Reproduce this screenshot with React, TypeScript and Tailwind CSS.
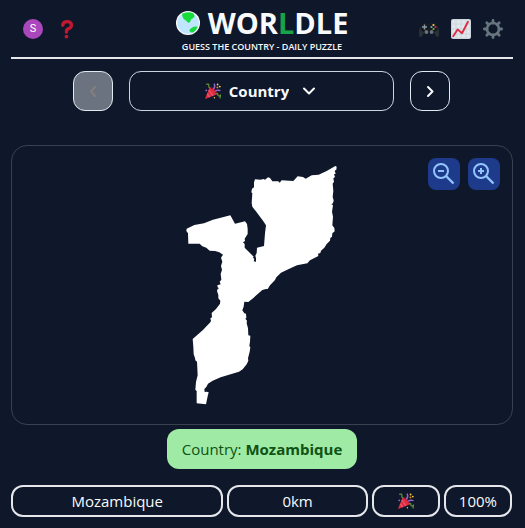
import { useState, type ReactNode } from "react";

function Globe() {
  return (
    <svg viewBox="0 0 24 24" className="size-6 shrink-0" aria-hidden="true">
      <circle cx="12" cy="12" r="12" fill="#fff" />
      <circle cx="12" cy="12" r="10.8" fill="#bfe6ff" />
      <path d="M6 2.8Q12 -.2 17.6 2.6L18.6 5.6L16.6 7.4L15 8.2L14.4 10.5L12.6 12L10.4 10L7.4 7.8L6.4 5.2Z" fill="#16dc3a" />
      <path d="M21.8 15.6L17.5 15.8L13.8 18.2L13.4 20L15.2 21.6L17.4 21.4Q20.6 19 21.8 15.6Z" fill="#16dc3a" />
    </svg>
  );
}

function QuestionMark() {
  return (
    <svg viewBox="0 0 20 20" className="size-5" aria-hidden="true">
      <path d="M5.7 6.2Q6.2 2.4 10.6 2.6Q14.6 3 14.4 6.4Q14.1 9 11.6 9.6Q9.3 10.3 9.5 13" fill="none" stroke="#be1931" strokeWidth="3.4" strokeLinecap="round" />
      <circle cx="9.5" cy="17.6" r="1.9" fill="#be1931" />
    </svg>
  );
}

function Gamepad() {
  return (
    <svg viewBox="0 0 20 20" className="size-5" aria-hidden="true">
      <path d="M0 17V11L2.4 6L4 4.4H8L9 5.4H11L12 4.4H16L17.6 6L20 11V17Q18 19 16.6 16.6L15 13.4H5L3.4 16.6Q2 19 0 17Z" fill="#2b3036" />
      <path d="M2.4 6L4 4.4H8L9 5.4H11L12 4.4H16L17.6 6L18.6 11L14 14H6L1.4 11Z" fill="#17191d" />
      <path d="M5.5 5.5V10.5M3 8H8" stroke="#8899a6" strokeWidth="1.5" />
      <circle cx="7.4" cy="13" r="1.9" fill="#66757f" />
      <circle cx="12.6" cy="13" r="1.9" fill="#66757f" />
      <circle cx="14.5" cy="6" r="1.1" fill="#ffcc4d" />
      <circle cx="16.5" cy="8" r="1.1" fill="#dd2e44" />
      <circle cx="12.5" cy="8" r="1.1" fill="#55acee" />
      <circle cx="14.5" cy="10" r="1.1" fill="#77b255" />
    </svg>
  );
}

function Chart() {
  return (
    <svg viewBox="0 0 20 20" className="size-5" aria-hidden="true">
      <rect width="20" height="20" rx="2" fill="#ccd6dd" />
      <rect x="1.2" y="1.2" width="17.6" height="17.6" rx="1" fill="#e1e8ed" />
      <path d="M5 1V19M10 1V19M15 1V19M1 5H19M1 10H19M1 15H19" stroke="#ccd6dd" strokeWidth="1" />
      <path d="M2.2 17.2L6.6 10.4L11 14.2L17 2.8" fill="none" stroke="#dd2e44" strokeWidth="1.9" strokeLinecap="round" strokeLinejoin="round" />
    </svg>
  );
}

function Gear() {
  return (
    <svg viewBox="0 0 20 20" className="size-5" fill="none" stroke="#66757f" aria-hidden="true">
      <circle cx="10" cy="10" r="6" strokeWidth="2.6" />
      <path d="M10 1.4V4M10 16V18.6M1.4 10H4M16 10H18.6M3.8 3.8L5.7 5.7M14.3 14.3L16.2 16.2M3.8 16.2L5.7 14.3M14.3 5.7L16.2 3.8" strokeWidth="2.8" strokeLinecap="round" />
    </svg>
  );
}

function Popper() {
  return (
    <svg viewBox="0 0 16 16" className="size-4 shrink-0" aria-hidden="true">
      <path d="M.3 15.1Q-.1 15.8 .8 15.7L12.2 11.3Q11.8 8.2 9.2 6Q7 4 4.6 4.2Z" fill="#dd2e44" />
      <path d="M3.8 7L8 13M2.2 10.8L4.8 14.2" stroke="#ea596e" strokeWidth="1.2" />
      <path d="M6 5.2Q9.8 5.6 11.6 10.6" fill="none" stroke="#a0041e" strokeWidth="1.1" />
      <path d="M8.2 6.3Q10.8 3.4 9 .6" fill="none" stroke="#9266cc" strokeWidth="1.5" />
      <path d="M10 8.3Q12.6 6.4 15.5 7.7" fill="none" stroke="#9266cc" strokeWidth="1.4" />
      <path d="M1.2 1.4Q4.4 .2 3.8 2.8Q3.6 4.4 4.8 5" fill="none" stroke="#5c913b" strokeWidth="1.3" />
      <path d="M11.2 10.8Q13 9.8 12.8 11.8Q13 13.8 15.4 12.2L15 15.4" fill="none" stroke="#5c913b" strokeWidth="1.3" />
      <circle cx="1.3" cy="7.4" r=".9" fill="#9266cc" />
      <circle cx="12.6" cy="1.5" r=".9" fill="#ffcc4d" />
      <circle cx="14.8" cy="3.6" r=".9" fill="#ffcc4d" />
      <circle cx="12.4" cy="4.4" r=".9" fill="#f4900c" />
      <circle cx="9.4" cy="14.8" r=".7" fill="#ffcc4d" />
    </svg>
  );
}

function Chevron({ d }: { d: string }) {
  return (
    <svg viewBox="0 0 16 16" className="size-4 shrink-0" fill="none" stroke="currentColor" strokeWidth="2" strokeLinecap="round" strokeLinejoin="round" aria-hidden="true">
      <path d={d} />
    </svg>
  );
}

function Magnifier({ plus = false }: { plus?: boolean }) {
  return (
    <svg viewBox="0 0 24 24" className="size-6" fill="none" stroke="#93c5fd" strokeWidth="2" aria-hidden="true">
      <circle cx="9" cy="9" r="7" />
      <path d={plus ? "M6 9H12M9 6V12" : "M6 9H12"} />
      <path d="M14 14L21.5 21.5" strokeWidth="2.4" />
    </svg>
  );
}

function CountryShape() {
  return (
    <svg viewBox="0 0 495 780" className="h-[260px] w-[165px]" fill="#fff" role="img" aria-label="Country outline">
      <path d="M225 73L242 74L250 72L255 74L264 67L270 69L277 79L295 79L299 83L305 76L340 78L353 64L369 66L377 71L395 61L416 59L440 48L466 33L470 35L469 44L464 47L467 56L462 58L465 66L460 70L462 80L458 86L460 108L458 126L461 136L459 145L454 147L459 151L456 170L459 185L457 211L463 219L464 229L457 235L456 245L451 249L450 257L440 267L433 278L423 287L421 294L414 296L415 303L390 316L382 325L351 331L328 341L303 353L289 367L285 375L270 391L263 402L258 402L247 405L221 428L205 441L193 440L191 455L187 466L193 475L198 476L199 489L196 491L201 497L200 505L204 520L205 541L211 542L210 560L208 573L211 577L209 590L204 610L205 617L200 628L188 643L177 650L122 667L98 677L84 686L79 696L73 702L74 711L80 710L86 712L83 724L78 748L50 745L50 708L46 704L48 681L53 661L51 620L46 616L45 609L41 598L40 575L38 552L68 526L91 502L93 497L91 490L96 487L95 474L108 462L120 446L121 437L115 430L115 420L111 408L113 402L117 400L113 397L112 391L122 388L119 380L124 374L122 357L126 344L123 333L127 320L123 308L129 299L118 292L105 288L89 287L79 278L67 274L59 266L25 266L24 235L19 228L20 221L43 210L72 205L99 194L151 181L165 206L195 199L201 207L203 221L203 237L194 251L195 258L189 262L194 267L194 278L221 305L219 308L223 312L221 319L228 320L228 310L226 302L230 294L231 278L252 273L255 235L258 211L248 196L217 155L215 144L217 115L214 112L216 101L222 97L222 82Z" />
    </svg>
  );
}

function IconButton({ label, children }: { label: string; children: ReactNode }) {
  return (
    <button type="button" aria-label={label} className="flex size-5 items-center justify-center">
      {children}
    </button>
  );
}

function ResultCell({ className = "", children }: { className?: string; children: ReactNode }) {
  return (
    <div className={`flex h-8 items-center justify-center rounded-xl border-2 border-gray-200 ${className}`}>
      {children}
    </div>
  );
}

export default function App() {
  const [round, setRound] = useState("Country");

  return (
    <div className="min-h-screen bg-[#0f172a] pr-3 pl-[11px] font-['Open_Sans',sans-serif] text-[15px] leading-6 text-slate-50">
      <header className="flex h-[59px] items-center justify-between border-b-2 border-gray-200 px-2.5">
        <div className="flex w-20 items-center gap-3.5 pl-0.5">
          <button type="button" aria-label="Account" className="flex size-5 items-center justify-center rounded-full bg-[#ab47bc] font-['Roboto',sans-serif] text-[11px] leading-none text-white">
            S
          </button>
          <IconButton label="Help"><QuestionMark /></IconButton>
        </div>
        <div className="flex flex-col items-center">
          <h1 className="flex items-center gap-2 text-[29px] leading-9 font-bold">
            <Globe />
            <span>WOR<span className="text-[#16a34a]">L</span>DLE</span>
          </h1>
          <p className="text-[9px] leading-3 font-semibold whitespace-nowrap">GUESS THE COUNTRY - DAILY PUZZLE</p>
        </div>
        <div className="flex w-20 items-center justify-end gap-3">
          <IconButton label="More games"><Gamepad /></IconButton>
          <IconButton label="Statistics"><Chart /></IconButton>
          <IconButton label="Settings"><Gear /></IconButton>
        </div>
      </header>

      <main>
        <nav className="mt-3 flex justify-center gap-4 pr-0.5" aria-label="Rounds">
          <button type="button" disabled aria-label="Previous round" className="flex size-10 items-center justify-center rounded-xl border border-slate-200 bg-[#6b7280] text-[#85807b]">
            <Chevron d="M10 4L6 8.5L10 13" />
          </button>
          <label className="flex h-10 w-[265px] items-center justify-center rounded-xl border border-slate-300">
            <Popper />
            <select
              aria-label="Round"
              value={round}
              onChange={(event) => setRound(event.target.value)}
              className="ml-2 field-sizing-content appearance-none bg-transparent pr-3 text-[15px] leading-6 font-bold"
            >
              <option>Country</option>
            </select>
            <Chevron d="M3 5.5L8 10.5L13 5.5" />
          </label>
          <button type="button" aria-label="Next round" className="flex size-10 items-center justify-center rounded-xl border border-slate-200">
            <Chevron d="M6 4L10.5 8.5L6 13" />
          </button>
        </nav>

        <section className="relative mt-[34px] flex h-[280px] items-center justify-center rounded-2xl border border-[#394150]">
          <CountryShape />
          <div className="absolute top-3 right-3 flex gap-2">
            <button type="button" aria-label="Zoom out" className="flex size-8 items-center justify-center rounded-lg bg-[#1e3a8a]">
              <Magnifier />
            </button>
            <button type="button" aria-label="Zoom in" className="flex size-8 items-center justify-center rounded-lg bg-[#1e3a8a]">
              <Magnifier plus />
            </button>
          </div>
        </section>

        <p className="mx-auto mt-1 flex h-10 w-fit items-center rounded-xl bg-[#9feaa5] px-[15px] whitespace-pre text-[#0f5214]">
          Country: <strong className="font-bold">Mozambique</strong>
        </p>

        <div className="mt-4 grid grid-cols-7 gap-1 pr-px">
          <ResultCell className="col-span-3">Mozambique</ResultCell>
          <ResultCell className="col-span-2">0km</ResultCell>
          <ResultCell><Popper /></ResultCell>
          <ResultCell>100%</ResultCell>
        </div>
      </main>
    </div>
  );
}
